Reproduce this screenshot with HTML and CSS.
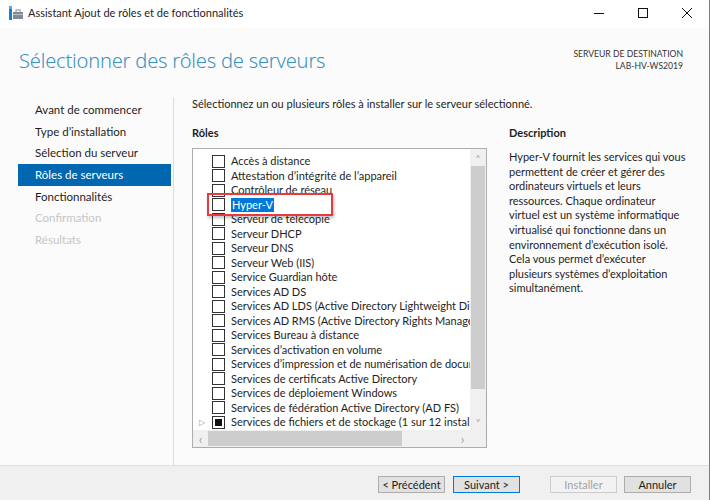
FILE: index.html
```html
<!doctype html>
<html>
<head>
	<meta charset="utf-8">
	<title>Assistant Ajout de rôles et de fonctionnalités</title>
	<link rel="stylesheet" href="styles.css">
</head>
<body>
	<div class="window">
		<div class="titlebar">
			<svg class="app-icon" width="16" height="16" viewBox="0 0 16 16">
				<rect x="1" y="1" width="3" height="14" fill="#1e7cc8"/>
				<rect x="1" y="1" width="3" height="3" fill="#5aa9e6"/>
				<rect x="5" y="7" width="10" height="7" fill="#7f8b96"/>
				<rect x="8" y="5" width="4" height="3" fill="none" stroke="#7f8b96" stroke-width="1"/>
				<rect x="5" y="9" width="10" height="1" fill="#b9c2ca"/>
			</svg>
			<span class="title">Assistant Ajout de rôles et de fonctionnalités</span>
			<div class="controls">
				<span class="ctl"><svg width="10" height="10" viewBox="0 0 10 10"><line x1="0" y1="5.5" x2="10" y2="5.5" stroke="#111" stroke-width="1"/></svg></span>
				<span class="ctl"><svg width="10" height="10" viewBox="0 0 10 10"><rect x="0.5" y="0.5" width="9" height="9" fill="none" stroke="#111" stroke-width="1"/></svg></span>
				<span class="ctl"><svg width="10" height="10" viewBox="0 0 10 10"><path d="M0 0 L10 10 M10 0 L0 10" stroke="#111" stroke-width="1"/></svg></span>
			</div>
		</div>

		<div class="header">
			<h1>Sélectionner des rôles de serveurs</h1>
			<div class="dest">
				<div>SERVEUR DE DESTINATION</div>
				<div>LAB-HV-WS2019</div>
			</div>
		</div>

		<div class="main">
			<ul class="steps">
				<li>Avant de commencer</li>
				<li>Type d’installation</li>
				<li>Sélection du serveur</li>
				<li class="active">Rôles de serveurs</li>
				<li>Fonctionnalités</li>
				<li class="off">Confirmation</li>
				<li class="off">Résultats</li>
			</ul>

			<div class="content">
				<p class="intro">Sélectionnez un ou plusieurs rôles à installer sur le serveur sélectionné.</p>
				<div class="columns">
					<div class="roles">
						<h2>Rôles</h2>
						<div class="listbox">
							<div class="list-area">
								<ul class="list">
									<li><span class="cb"></span>Accès à distance</li>
									<li><span class="cb"></span>Attestation d’intégrité de l’appareil</li>
									<li><span class="cb"></span>Contrôleur de réseau</li>
									<li><span class="cb"></span><span class="sel">Hyper-V</span></li>
									<li><span class="cb"></span>Serveur de télécopie</li>
									<li><span class="cb"></span>Serveur DHCP</li>
									<li><span class="cb"></span>Serveur DNS</li>
									<li><span class="cb"></span>Serveur Web (IIS)</li>
									<li><span class="cb"></span>Service Guardian hôte</li>
									<li><span class="cb"></span>Services AD DS</li>
									<li><span class="cb"></span>Services AD LDS (Active Directory Lightweight Directory Services)</li>
									<li><span class="cb"></span>Services AD RMS (Active Directory Rights Management Services)</li>
									<li><span class="cb"></span>Services Bureau à distance</li>
									<li><span class="cb"></span>Services d’activation en volume</li>
									<li><span class="cb"></span>Services d’impression et de numérisation de document</li>
									<li><span class="cb"></span>Services de certificats Active Directory</li>
									<li><span class="cb"></span>Services de déploiement Windows</li>
									<li><span class="cb"></span>Services de fédération Active Directory (AD FS)</li>
									<li><span class="arrow">▷</span><span class="cb part"></span>Services de fichiers et de stockage (1 sur 12 installé(s))</li>
								</ul>
								<div class="vscroll">
									<span class="btn">&#708;</span>
									<div class="thumb"></div>
									<div class="track"></div>
									<span class="btn">&#709;</span>
								</div>
							</div>
							<div class="hscroll">
								<span class="btn">&lsaquo;</span>
								<div class="thumb"></div>
								<div class="track"></div>
								<span class="btn">&rsaquo;</span>
								<span class="corner"></span>
							</div>
							<div class="callout"></div>
						</div>
					</div>
					<div class="desc">
						<h2>Description</h2>
						<p>Hyper-V fournit les services qui vous permettent de créer et gérer des ordinateurs virtuels et leurs ressources. Chaque ordinateur<br>virtuel est un système informatique virtualisé qui fonctionne dans un environnement d’exécution isolé. Cela vous permet d’exécuter plusieurs systèmes d’exploitation simultanément.</p>
					</div>
				</div>
			</div>
		</div>

		<div class="footer">
			<button class="button">&lt; Précédent</button>
			<button class="button default">Suivant &gt;</button>
			<button class="button disabled">Installer</button>
			<button class="button">Annuler</button>
		</div>
	</div>
</body>
</html>
```

FILE: styles.css
```css
* {
	box-sizing: border-box;
}
body {
	margin: 0;
	background: #fff;
	font-family: Lato, "Noto Sans", sans-serif;
	font-size: 11px;
	color: #1e1e1e;
}
ul {
	list-style: none;
	margin: 0;
	padding: 0;
}
p, h1, h2 {
	margin: 0;
}
.window {
	width: 710px;
	height: 500px;
	display: flex;
	flex-direction: column;
	background: #fbfbfb;
	border-right: 1px solid #7a7a7a;
}
.titlebar {
	height: 28px;
	display: flex;
	align-items: center;
	background: #fff;
	padding-left: 8px;
	flex-shrink: 0;
}
.app-icon {
	margin-right: 4px;
	margin-top: -2px;
}
.title {
	font-size: 11px;
	margin-top: -3px;
	flex: 1;
}
.controls {
	display: flex;
	height: 100%;
}
.ctl {
	width: 44px;
	display: flex;
	align-items: center;
	justify-content: center;
	margin-top: -2px;
}
.header {
	height: 67px;
	display: flex;
	justify-content: space-between;
	padding: 19px 26px 0 19px;
	flex-shrink: 0;
}
.header h1 {
	font-family: "Noto Sans", sans-serif;
	font-weight: 300;
	font-size: 20.1px;
	line-height: 28px;
	color: #3a92c2;
	letter-spacing: -0.2px;
}
.dest {
	text-align: right;
	font-size: 8.6px;
	line-height: 12px;
	color: #333;
	padding-top: 1px;
}
.main {
	flex: 1;
	display: flex;
	min-height: 0;
}
.steps {
	width: 156px;
	margin-left: 18px;
	margin-top: 2px;
	padding-top: 2px;
	border-right: 1px solid #dcdcdc;
	font-size: 11.5px;
}
.steps li {
	height: 21.67px;
	line-height: 21.67px;
	padding-left: 17px;
	margin-right: 2px;
}
.steps li.active {
	background: #0067b0;
	color: #fff;
}
.steps li.off {
	color: #c6c6c6;
}
.content {
	flex: 1;
	padding: 1px 0 0 18px;
	display: flex;
	flex-direction: column;
}
.intro {
	line-height: 16px;
}
.columns {
	display: flex;
	gap: 22px;
	margin-top: 13px;
}
.roles h2, .desc h2 {
	font-size: 11px;
	font-weight: 700;
	line-height: 16px;
	margin-bottom: 7px;
}
.roles {
	width: 295px;
}
.listbox {
	position: relative;
	border: 1px solid #adadad;
	background: #fff;
	height: 300px;
	display: flex;
	flex-direction: column;
}
.list-area {
	flex: 1;
	display: flex;
	min-height: 0;
}
.list {
	flex: 1;
	overflow: hidden;
	padding-top: 5px;
}
.list li {
	height: 14.5px;
	line-height: 14.5px;
	white-space: nowrap;
	display: flex;
	align-items: center;
	padding-left: 19px;
	position: relative;
}
.cb {
	width: 13px;
	height: 13px;
	border: 1px solid #333;
	background: #fff;
	margin-right: 6px;
	flex-shrink: 0;
	display: flex;
	align-items: center;
	justify-content: center;
}
.cb.part::after {
	content: "";
	width: 7px;
	height: 7px;
	background: #111;
}
.arrow {
	position: absolute;
	left: 6px;
	font-size: 8px;
	color: #9a9a9a;
}
.sel {
	background: #0078d7;
	color: #fff;
	padding: 0 1px;
}
.vscroll {
	width: 16px;
	background: #f0f0f0;
	display: flex;
	flex-direction: column;
}
.vscroll .btn {
	height: 17px;
	display: flex;
	align-items: center;
	justify-content: center;
	color: #a0a0a0;
	font-size: 10px;
}
.vscroll .thumb {
	height: 223px;
	background: #cdcdcd;
	margin: 0 1px;
}
.vscroll .track {
	flex: 1;
}
.hscroll {
	height: 17px;
	background: #f0f0f0;
	display: flex;
	flex-shrink: 0;
}
.hscroll .btn {
	width: 15px;
	display: flex;
	align-items: center;
	justify-content: center;
	color: #a0a0a0;
	font-size: 13px;
}
.hscroll .thumb {
	width: 194px;
	background: #cdcdcd;
	margin: 1px 0;
}
.hscroll .track {
	flex: 1;
}
.hscroll .corner {
	width: 16px;
	background: #f0f0f0;
}
.callout {
	position: absolute;
	left: 14px;
	top: 44px;
	width: 126px;
	height: 23px;
	border: 2px solid #e8393e;
	box-shadow: 1px 2px 3px rgba(0, 0, 0, 0.25);
}
.desc {
	width: 182px;
}
.desc p {
	line-height: 14.6px;
	margin-top: 9px;
}
.footer {
	height: 35px;
	flex-shrink: 0;
	background: #f0f0f0;
	border-top: 1px solid #dfdfdf;
	display: flex;
	padding: 10px 18px 0 0;
	justify-content: flex-end;
	align-items: flex-start;
}
.button {
	height: 17px;
	width: 67px;
	padding: 0;
	font-family: inherit;
	font-size: 11px;
	line-height: 14px;
	color: #1e1e1e;
	background: #e1e1e1;
	border: 1px solid #adadad;
	margin-left: 7px;
}
.button.default {
	border-color: #0078d7;
	margin-left: 8px;
}
.button.disabled {
	color: #a3a3a3;
	background: #f2f2f2;
	border-color: #cccccc;
	margin-left: 30px;
}
```
